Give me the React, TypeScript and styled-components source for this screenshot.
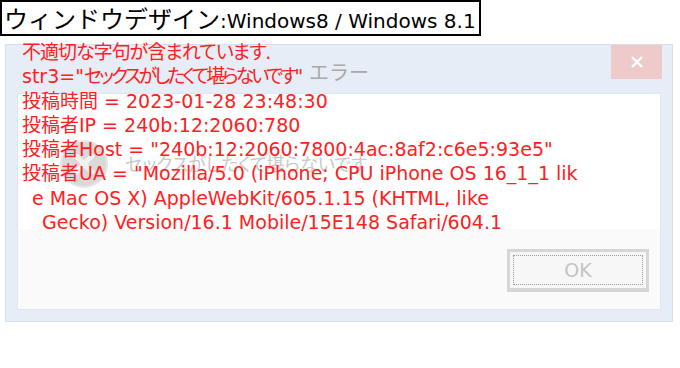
import React from "react";
import styled, { createGlobalStyle } from "styled-components";

const GlobalStyle = createGlobalStyle`
  html, body { margin: 0; padding: 0; background: #ffffff; }
  body { font-family: "DejaVu Sans", "Noto Sans CJK JP", sans-serif; }
`;

const Page = styled.div`
  width: 680px;
  height: 368px;
  display: flex;
  flex-direction: column;
  align-items: flex-start;
  overflow: hidden;
`;

const Caption = styled.div`
  box-sizing: border-box;
  height: 36px;
  border: 2px solid #000;
  padding: 0 3px 0 2px;
  display: flex;
  align-items: baseline;
  line-height: 31px;
  color: #000;
  white-space: nowrap;
`;

const CaptionJa = styled.span`
  font-family: "Noto Sans CJK JP", sans-serif;
  font-size: 24px;
`;

const CaptionEn = styled.span`
  font-family: "DejaVu Sans", sans-serif;
  font-size: 20px;
`;

const DialogWrap = styled.div`
  position: relative;
  margin: 8px 0 0 5px;
`;

const Frame = styled.div`
  box-sizing: border-box;
  width: 668px;
  height: 278px;
  background: #e6edf7;
  border: 1px solid #d7dfea;
  display: flex;
  flex-direction: column;
`;

const TitleBar = styled.div`
  height: 48px;
  display: grid;
  grid-template-columns: 1fr auto 1fr;
  align-items: start;
  padding: 0 10px;
`;

const Title = styled.div`
  grid-column: 2;
  padding-top: 14px;
  font-family: "Noto Sans CJK JP", sans-serif;
  font-size: 20px;
  line-height: 26px;
  color: #a8a8a8;
`;

const CloseButton = styled.div`
  grid-column: 3;
  justify-self: end;
  width: 51px;
  height: 34px;
  background: #efcaca;
  display: flex;
  align-items: center;
  justify-content: center;
`;

const Client = styled.div`
  box-sizing: border-box;
  margin: 0 11px;
  height: 217px;
  border: 1px solid #dfe6ef;
  display: flex;
  flex-direction: column;
`;

const Content = styled.div`
  height: 135px;
  background: #ffffff;
  display: flex;
  align-items: center;
  gap: 17px;
  padding-left: 42px;
`;

const ErrorIcon = styled.div`
  width: 48px;
  height: 48px;
  flex: none;
  margin-top: 4px;
`;

const Message = styled.div`
  font-family: "Noto Sans CJK JP", sans-serif;
  font-size: 18px;
  line-height: 24px;
  color: #c9c9c9;
  margin-top: 2px;
  font-feature-settings: "palt";
`;

const Footer = styled.div`
  flex: 1;
  background: #fafafa;
  display: flex;
  justify-content: flex-end;
  align-items: flex-start;
  padding: 20px 11px 0 0;
`;

const OkButton = styled.div`
  box-sizing: border-box;
  width: 142px;
  height: 43px;
  border: 3px solid #d6d6d6;
  border-bottom-width: 4px;
  background: #f7f7f7;
  padding: 3px;
`;

const FocusRect = styled.div`
  box-sizing: border-box;
  height: 100%;
  border: 1px dotted #9a9a9a;
  display: flex;
  align-items: center;
  justify-content: center;
  font-family: "DejaVu Sans", sans-serif;
  font-size: 19px;
  color: #c4c4c4;
`;

const Overlay = styled.div`
  position: absolute;
  left: 17px;
  top: -4px;
  font-family: "DejaVu Sans", "Noto Sans CJK JP", sans-serif;
  font-size: 19px;
  line-height: 24.3px;
  color: #ff2020;
  white-space: pre;
  pointer-events: none;
  font-feature-settings: "palt";
`;

const Line = styled.div<{ $indent?: number }>`
  padding-left: ${(p) => p.$indent ?? 0}px;
`;

const Kana = styled.span<{ $squeeze: number }>`
  letter-spacing: ${(p) => -p.$squeeze}px;
`;

export default function App() {
  return (
    <>
      <GlobalStyle />
      <Page>
        <Caption>
          <CaptionJa>ウィンドウデザイン</CaptionJa>
          <CaptionEn>:Windows8 / Windows 8.1</CaptionEn>
        </Caption>
        <DialogWrap>
          <Frame>
            <TitleBar>
              <Title>エラー</Title>
              <CloseButton>
                <svg width="14" height="12" viewBox="0 0 14 12">
                  <path d="M2 1 L12 11 M12 1 L2 11" stroke="#ffffff" strokeWidth="2.4" />
                </svg>
              </CloseButton>
            </TitleBar>
            <Client>
              <Content>
                <ErrorIcon>
                  <svg width="48" height="48" viewBox="0 0 48 48">
                    <circle cx="24" cy="24" r="23" fill="#d9d9d9" stroke="#e6e6e6" strokeWidth="2" />
                    <path d="M16 16 L32 32 M32 16 L16 32" stroke="#f2f2f2" strokeWidth="5" strokeLinecap="round" />
                  </svg>
                </ErrorIcon>
                <Message>セックスがしたくて堪らないです</Message>
              </Content>
              <Footer>
                <OkButton>
                  <FocusRect>OK</FocusRect>
                </OkButton>
              </Footer>
            </Client>
          </Frame>
          <Overlay>
            <Line>
              <Kana $squeeze={1}>不適切な字句が含まれています</Kana>.
            </Line>
            <Line>
              str3="<Kana $squeeze={3}>セックスがしたくて堪らないです</Kana>"
            </Line>
            <Line>投稿時間 = 2023-01-28 23:48:30</Line>
            <Line>投稿者IP = 240b:12:2060:780</Line>
            <Line>投稿者Host = "240b:12:2060:7800:4ac:8af2:c6e5:93e5"</Line>
            <Line>投稿者UA = "Mozilla/5.0 (iPhone; CPU iPhone OS 16_1_1 lik</Line>
            <Line $indent={10}>e Mac OS X) AppleWebKit/605.1.15 (KHTML, like</Line>
            <Line $indent={20}>Gecko) Version/16.1 Mobile/15E148 Safari/604.1</Line>
          </Overlay>
        </DialogWrap>
      </Page>
    </>
  );
}
